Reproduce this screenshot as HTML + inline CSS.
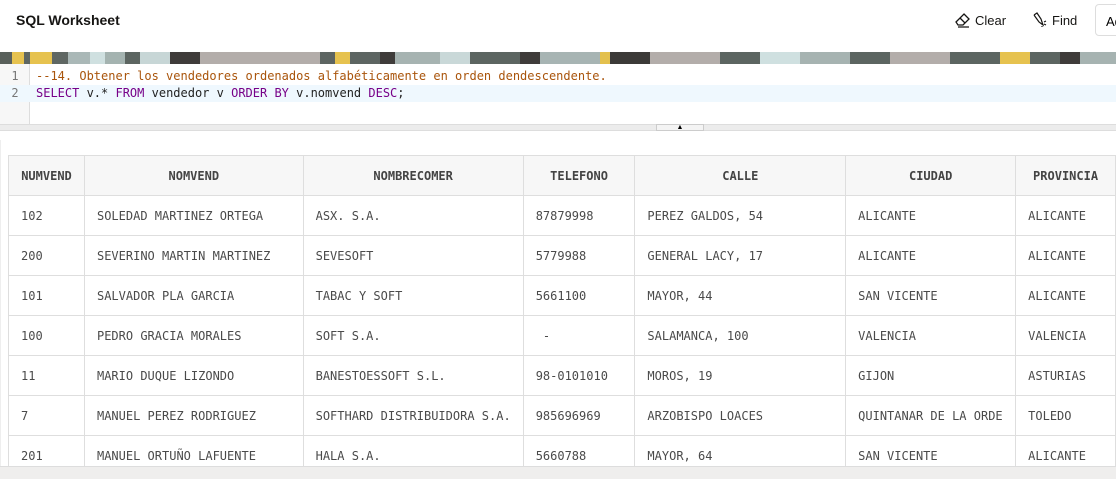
<!DOCTYPE html>
<html><head><meta charset="utf-8">
<style>
*{margin:0;padding:0;box-sizing:border-box}
body{width:1116px;height:479px;overflow:hidden;background:#fff;font-family:"Liberation Sans",sans-serif;position:relative}
.hdr{position:absolute;left:0;top:0;width:1116px;height:52px;background:#fff}
.title{position:absolute;left:16px;top:12px;font-size:14px;font-weight:bold;color:#161513}
.btn{position:absolute;top:12px;font-size:13px;color:#161513}
.banner{position:absolute;left:0;top:52px;width:1116px;height:12px;
background:linear-gradient(90deg,#59605b 0 12px,#e6c24f 12px 24px,#5e6662 24px 30px,#e6c24f 30px 52px,#5f6763 52px 68px,#aab8b7 68px 90px,#cfe0e0 90px 105px,#a4b3b0 105px 125px,#5c6561 125px 140px,#c7d6d6 140px 170px,#3f3c3a 170px 200px,#b3adaa 200px 320px,#5d6562 320px 335px,#e6c24f 335px 350px,#5d6562 350px 380px,#3f3c3a 380px 395px,#a6b3b1 395px 440px,#c9d8d8 440px 470px,#5c6561 470px 520px,#3f3c3a 520px 540px,#a7b4b3 540px 600px,#e3c04d 600px 610px,#3c3a38 610px 650px,#b3adaa 650px 720px,#5c6561 720px 760px,#cfe0e0 760px 800px,#a6b3b1 800px 850px,#5c6561 850px 890px,#b3adaa 890px 950px,#5c6561 950px 1000px,#e6c24f 1000px 1030px,#5c6561 1030px 1060px,#3f3c3a 1060px 1080px,#a6b3b1 1080px)}
.gutter{position:absolute;left:0;top:64px;width:30px;height:60px;background:#f7f7f7;border-right:1px solid #ddd}
.code{position:absolute;left:31px;top:64px;width:1085px;height:60px}
.ln{position:absolute;left:0;width:30px;text-align:center;font:12px "DejaVu Sans Mono",monospace;color:#777}
.cl{position:absolute;left:5px;font:12px "DejaVu Sans Mono",monospace;color:#222;white-space:pre}
.kw{color:#770088}.cm{color:#a9540b}
.split{position:absolute;left:0;top:124px;width:1116px;height:7px;background:#ececec;border-top:1px solid #ddd;border-bottom:1px solid #ddd}
.handle{position:absolute;left:656px;top:124px;width:48px;height:7px;background:#f4f4f4;border:1px solid #ccc;font-size:7px;text-align:center;line-height:6px;color:#000}
table{position:absolute;left:8px;top:155px;border-collapse:collapse;font:12px "DejaVu Sans Mono",monospace;color:#4a4a4a}
td,th{border:1px solid #dedede;height:40px;padding:0 12px;white-space:nowrap;text-align:left}
th{background:#f7f7f7;font-weight:bold;text-align:center;color:#444}
.scroll{position:absolute;left:0;top:466px;width:1116px;height:13px;background:#efeeed;border-top:1px solid #ddd}
.lb{position:absolute;left:0;top:140px;width:1px;height:330px;background:#eee}
</style></head><body>
<div class="hdr">
<div class="title">SQL Worksheet</div>
<div class="btn" style="left:955px"><svg width="16" height="16" viewBox="0 0 16 16" style="vertical-align:-3px;margin-right:4px"><path d="M9 2 L14 7 L8 13 L3 13 L1 10 Z M5 6 L10 11 M3 15 H14" fill="none" stroke="#161513" stroke-width="1.3"/></svg>Clear</div>
<div class="btn" style="left:1032px"><svg width="16" height="16" viewBox="0 0 16 16" style="vertical-align:-3px;margin-right:4px"><path d="M2 3 L5 1 L9 7 L11 13 L7 10 L2 3 M12 10 L14 9 M12 12 L14 13 M10 14 L10 15" fill="none" stroke="#161513" stroke-width="1.2"/></svg>Find</div>
<div style="position:absolute;left:1095px;top:4px;width:30px;height:32px;border:1px solid #ddd;border-radius:4px;font-size:13px;padding:9px 0 0 10px">Ad</div>
</div>
<div class="banner"></div>
<div class="gutter"></div>
<div style="position:absolute;left:0;top:85px;width:1116px;height:17px;background:#eff8fe"></div>
<div class="ln" style="top:69px">1</div>
<div class="ln" style="top:86px">2</div>
<div class="code">
<div class="cl cm" style="top:5px">--14. Obtener los vendedores ordenados alfabéticamente en orden dendescendente.</div>
<div class="cl" style="top:22px"><span class="kw">SELECT</span> v.* <span class="kw">FROM</span> vendedor v <span class="kw">ORDER BY</span> v.nomvend <span class="kw">DESC</span>;</div>
</div>
<div class="split"></div>
<div class="handle">▲</div>
<div class="lb"></div>
<table>
<tr><th style="width:76px">NUMVEND</th><th style="width:219px">NOMVEND</th><th style="width:220px">NOMBRECOMER</th><th style="width:112px">TELEFONO</th><th style="width:212px">CALLE</th><th style="width:170px">CIUDAD</th><th style="width:100px">PROVINCIA</th></tr>
<tr><td>102</td><td>SOLEDAD MARTINEZ ORTEGA</td><td>ASX. S.A.</td><td>87879998</td><td style="width:212px">PEREZ GALDOS, 54</td><td style="width:170px">ALICANTE</td><td>ALICANTE</td></tr>
<tr><td>200</td><td>SEVERINO MARTIN MARTINEZ</td><td>SEVESOFT</td><td>5779988</td><td>GENERAL LACY, 17</td><td>ALICANTE</td><td>ALICANTE</td></tr>
<tr><td>101</td><td>SALVADOR PLA GARCIA</td><td>TABAC Y SOFT</td><td>5661100</td><td>MAYOR, 44</td><td>SAN VICENTE</td><td>ALICANTE</td></tr>
<tr><td>100</td><td>PEDRO GRACIA MORALES</td><td>SOFT S.A.</td><td>&nbsp;-</td><td>SALAMANCA, 100</td><td>VALENCIA</td><td>VALENCIA</td></tr>
<tr><td>11</td><td>MARIO DUQUE LIZONDO</td><td>BANESTOESSOFT S.L.</td><td>98-0101010</td><td>MOROS, 19</td><td>GIJON</td><td>ASTURIAS</td></tr>
<tr><td>7</td><td>MANUEL PEREZ RODRIGUEZ</td><td>SOFTHARD DISTRIBUIDORA S.A.</td><td>985696969</td><td>ARZOBISPO LOACES</td><td>QUINTANAR DE LA ORDE</td><td>TOLEDO</td></tr>
<tr><td>201</td><td>MANUEL ORTUÑO LAFUENTE</td><td>HALA S.A.</td><td>5660788</td><td>MAYOR, 64</td><td>SAN VICENTE</td><td>ALICANTE</td></tr>
</table>
<div class="scroll"></div>
</body></html>
